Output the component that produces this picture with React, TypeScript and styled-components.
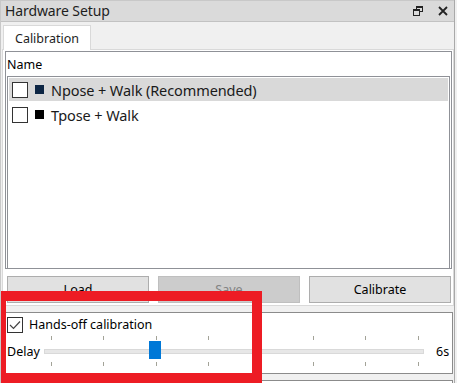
import styled, { createGlobalStyle } from "styled-components";

const GlobalStyle = createGlobalStyle`
  html, body {
    margin: 0;
    padding: 0;
    background: #f0f0f0;
    overflow: hidden;
  }
  body {
    font-family: "Noto Sans", "Open Sans", sans-serif;
    color: #000;
  }
`;

const Dock = styled.div`
  position: relative;
  width: 455px;
  height: 383px;
  box-sizing: border-box;
  border-left: 1px solid #c8c8c8;
  border-right: 1px solid #a9a9a9;
  background: #f0f0f0;
  overflow: hidden;
`;

const TitleBar = styled.div`
  display: flex;
  align-items: center;
  height: 22px;
  box-sizing: border-box;
  padding: 0 6px 1px 4px;
  background: #dadada;
  border-top: 1px solid #c8c8c8;
  border-bottom: 1px solid #c2c2c2;
`;

const Title = styled.span`
  flex: 1;
  font-size: 14px;
  color: #1e1e1e;
  letter-spacing: -0.1px;
`;

const TitleButtons = styled.div`
  display: flex;
  align-items: center;
  gap: 15px;
`;

const TabBar = styled.div`
  display: flex;
  padding: 3px 0 0 2px;
`;

const Tab = styled.div`
  width: 88px;
  height: 25px;
  box-sizing: border-box;
  display: flex;
  align-items: center;
  justify-content: center;
  background: #fff;
  border: 1px solid #d9d9d9;
  border-bottom: none;
  margin-bottom: -1px;
  position: relative;
  font-size: 12.5px;
  color: #1e1e1e;
`;

const Pane = styled.div`
  margin-left: 1px;
  border: 1px solid #d9d9d9;
  background: #fff;
  padding: 1px 1px 1px 2px;
  display: flex;
  flex-direction: column;
`;

const ListBox = styled.div`
  height: 216px;
  border: 1px solid #8f9197;
  display: flex;
  flex-direction: column;
  background: #fff;
`;

const Header = styled.div`
  height: 24px;
  box-sizing: border-box;
  padding: 4px 0 0 1px;
  font-size: 12.5px;
  color: #000;
`;

const Rows = styled.div`
  flex: 1;
  margin: 0 1px 0 1px;
  border: 1px solid #8f9197;
  border-bottom: none;
  padding: 1px 1px 0 1px;
`;

const Row = styled.div<{ $selected?: boolean }>`
  display: flex;
  align-items: center;
  height: 23px;
  margin-bottom: 2px;
  padding-left: 3px;
  background: ${({ $selected }) => ($selected ? "#d9d9d9" : "transparent")};
  font-size: 14.5px;
  letter-spacing: -0.1px;
  color: #1a1a1a;
`;

const Box = styled.span`
  width: 14px;
  height: 14px;
  border: 1px solid #333;
  background: #fff;
  display: inline-flex;
  align-items: center;
  justify-content: center;
  flex-shrink: 0;
`;

const Swatch = styled.span<{ $color: string }>`
  width: 9px;
  height: 9px;
  margin: 0 7px 0 7px;
  background: ${({ $color }) => $color};
  flex-shrink: 0;
`;

const ButtonRow = styled.div`
  display: grid;
  grid-template-columns: repeat(3, 1fr);
  gap: 9px;
  padding: 7px 1px 1px 2px;
`;

const Button = styled.div<{ $disabled?: boolean }>`
  height: 27px;
  box-sizing: border-box;
  display: flex;
  align-items: center;
  justify-content: center;
  border: 1px solid ${({ $disabled }) => ($disabled ? "#bfbfbf" : "#adadad")};
  background: ${({ $disabled }) => ($disabled ? "#cccccc" : "#e1e1e1")};
  color: ${({ $disabled }) => ($disabled ? "#838383" : "#000")};
  font-size: 12.5px;
`;

const GroupBox = styled.div`
  margin: 6px 1px 0 4px;
  height: 62px;
  box-sizing: border-box;
  border: 1px solid #8b8b8b;
  background: #fff;
  padding: 3px 0 0 1px;
`;

const CheckRow = styled.div`
  display: flex;
  align-items: center;
  gap: 6px;
  font-size: 12.5px;
  color: #000;
`;

const SliderRow = styled.div`
  display: flex;
  align-items: center;
  height: 36px;
  font-size: 12.5px;
`;

const SliderLabel = styled.span`
  width: 37px;
`;

const Slider = styled.div`
  position: relative;
  flex: 1;
  height: 36px;
  margin-right: 12px;
`;

const Groove = styled.div`
  position: absolute;
  left: 0;
  right: 0;
  top: 16px;
  height: 3px;
  background: #e7e7e7;
  border: 1px solid #d9d9d9;
`;

const Tick = styled.div<{ $top: number }>`
  position: absolute;
  top: ${({ $top }) => $top}px;
  width: 1px;
  height: 4px;
  background: #a3a398;
`;

const Handle = styled.div`
  position: absolute;
  top: 8px;
  width: 12px;
  height: 18px;
  background: #0078d7;
`;

const Value = styled.span`
  font-size: 12.5px;
  width: 16px;
`;

const NextBox = styled.div`
  margin: 6px 1px 0 4px;
  height: 20px;
  border: 1px solid #8b8b8b;
  border-bottom: none;
  background: #fff;
`;

const Highlight = styled.div`
  position: absolute;
  left: -5px;
  top: 291px;
  width: 246px;
  height: 72px;
  border: 10px solid #ed1c24;
`;

const ticks = [0, 1, 2, 3, 4, 5, 6, 7];

function RestoreIcon() {
  return (
    <svg width="10" height="10" viewBox="0 0 10 10">
      <rect x="3.5" y="0.5" width="6" height="5" fill="none" stroke="#222" />
      <rect x="3" y="0" width="7" height="2" fill="#222" />
      <rect x="0.5" y="3.5" width="6" height="6" fill="#dadada" stroke="#222" />
      <rect x="0" y="3" width="7" height="2" fill="#222" />
    </svg>
  );
}

function CloseIcon() {
  return (
    <svg width="10" height="10" viewBox="0 0 10 10">
      <path d="M1 1 L9 9 M9 1 L1 9" stroke="#222" strokeWidth="1.8" />
    </svg>
  );
}

function Check() {
  return (
    <svg width="12" height="10" viewBox="0 0 12 10">
      <path d="M1 5 L4.5 8.5 L11 1.5" fill="none" stroke="#444" strokeWidth="1.2" />
    </svg>
  );
}

export default function App() {
  return (
    <>
      <GlobalStyle />
      <Dock>
        <TitleBar>
          <Title>Hardware Setup</Title>
          <TitleButtons>
            <RestoreIcon />
            <CloseIcon />
          </TitleButtons>
        </TitleBar>
        <TabBar>
          <Tab>Calibration</Tab>
        </TabBar>
        <Pane>
          <ListBox>
            <Header>Name</Header>
            <Rows>
              <Row $selected>
                <Box />
                <Swatch $color="#0d2644" />
                Npose + Walk (Recommended)
              </Row>
              <Row>
                <Box />
                <Swatch $color="#000" />
                Tpose + Walk
              </Row>
            </Rows>
          </ListBox>
          <ButtonRow>
            <Button>Load</Button>
            <Button $disabled>Save</Button>
            <Button>Calibrate</Button>
          </ButtonRow>
        </Pane>
        <GroupBox>
          <CheckRow>
            <Box>
              <Check />
            </Box>
            Hands-off calibration
          </CheckRow>
          <SliderRow>
            <SliderLabel>Delay</SliderLabel>
            <Slider>
              <Groove />
              {ticks.map((t) => (
                <Tick key={"a" + t} $top={3} style={{ left: `${7 + t * 52.4}px` }} />
              ))}
              {ticks.map((t) => (
                <Tick key={"b" + t} $top={29} style={{ left: `${7 + t * 52.4}px` }} />
              ))}
              <Handle style={{ left: "105px" }} />
            </Slider>
            <Value>6s</Value>
          </SliderRow>
        </GroupBox>
        <NextBox />
        <Highlight />
      </Dock>
    </>
  );
}
